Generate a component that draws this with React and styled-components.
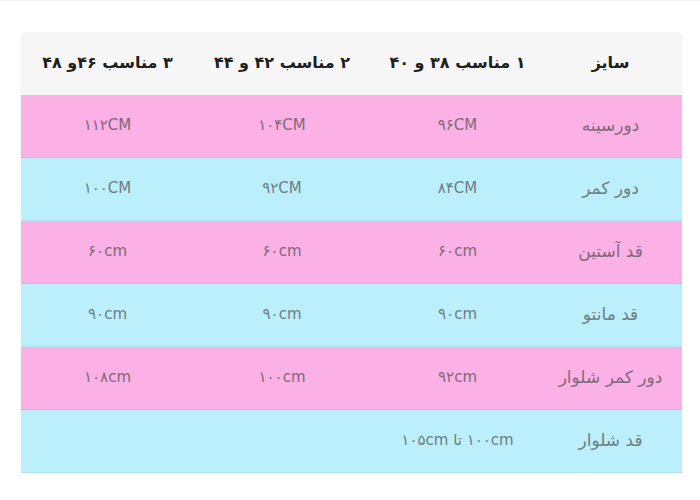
import React from "react";
import styled, { createGlobalStyle } from "styled-components";

const GlobalStyle = createGlobalStyle`
  body {
    margin: 0;
    background: #ffffff;
    font-family: "DejaVu Sans", "Noto Sans", sans-serif;
  }
`;

const Page = styled.div`
  width: 700px;
  height: 500px;
  padding: 32px 0 0 21px;
  box-sizing: border-box;
  border-top: 1px solid #f3f3f3;
`;

const Table = styled.div`
  direction: rtl;
  width: 661px;
  display: grid;
  grid-template-columns: 137px 175px 176px 173px;
  box-shadow: 0 0 3px rgba(0, 0, 0, 0.06);
`;

const HeadCell = styled.div`
  height: 62px;
  box-sizing: border-box;
  display: flex;
  align-items: center;
  justify-content: center;
  padding-bottom: 4px;
  background: #f6f6f6;
  color: #1e1e1e;
  font-weight: bold;
  font-size: 16px;
  padding-right: ${(p) => (p.$label ? "6px" : "0")};
`;

const Cell = styled.div`
  height: 63px;
  box-sizing: border-box;
  display: flex;
  align-items: center;
  justify-content: center;
  padding-bottom: 3px;
  background: ${(p) => (p.$pink ? "#fbb0e6" : "#bbeffc")};
  border-bottom: 1px solid ${(p) => (p.$pink ? "#f0a6dc" : "#b0e3f0")};
  color: ${(p) => (p.$pink ? "#7d6a78" : "#6f7d82")};
  font-size: ${(p) => (p.$label ? "17px" : "15px")};
  padding-right: ${(p) => (p.$label ? "6px" : "0")};
`;

const headers = ["سایز", "۱ مناسب ۳۸ و ۴۰", "۲ مناسب ۴۲ و ۴۴", "۳ مناسب ۴۶و ۴۸"];

const rows = [
  ["دورسینه", "۹۶CM", "۱۰۴CM", "۱۱۲CM"],
  ["دور کمر", "۸۴CM", "۹۲CM", "۱۰۰CM"],
  ["قد آستین", "۶۰cm", "۶۰cm", "۶۰cm"],
  ["قد مانتو", "۹۰cm", "۹۰cm", "۹۰cm"],
  ["دور کمر شلوار", "۹۲cm", "۱۰۰cm", "۱۰۸cm"],
  ["قد شلوار", "۱۰۰cm تا ۱۰۵cm", "", ""],
];

const App = () => {
  return (
    <>
      <GlobalStyle />
      <Page>
        <Table>
          {headers.map((h, j) => (
            <HeadCell key={h} $label={j === 0}>
              {h}
            </HeadCell>
          ))}
          {rows.map((row, i) =>
            row.map((value, j) => (
              <Cell key={i + "-" + j} $pink={i % 2 === 0} $label={j === 0}>
                {value}
              </Cell>
            ))
          )}
        </Table>
      </Page>
    </>
  );
};

export default App;
